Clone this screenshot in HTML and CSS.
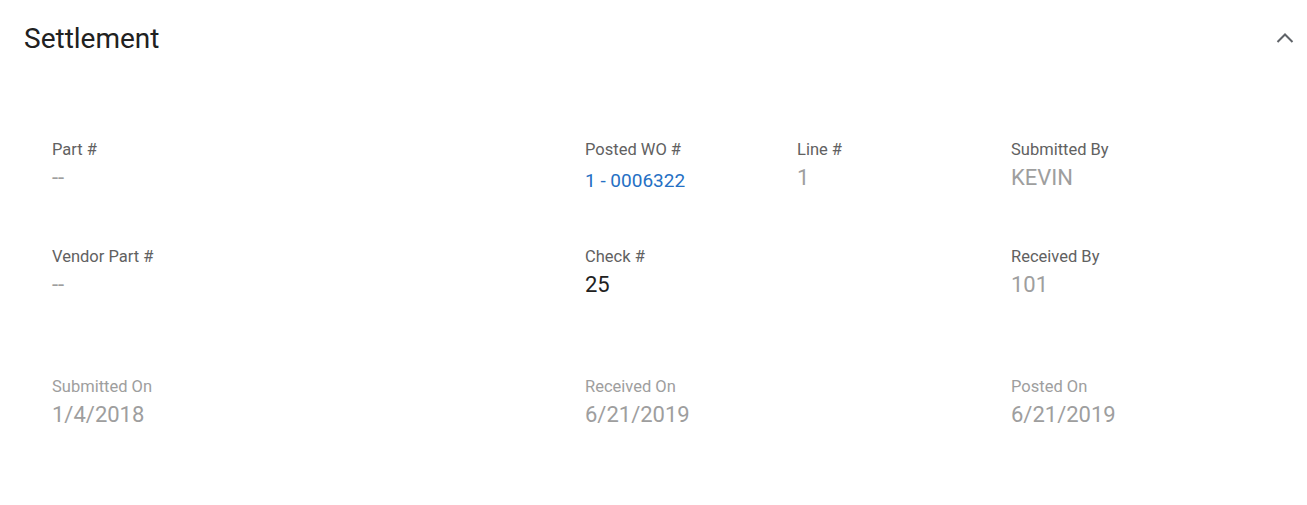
FILE: index.html
```html
<!DOCTYPE html>
<html>
<head>
<meta charset="utf-8">
<link rel="stylesheet" href="styles.css">
</head>
<body>
<section class="panel">
  <header class="panel-header">
    <h2 class="panel-title">Settlement</h2>
    <button class="collapse-btn" aria-label="Collapse">
      <svg width="18" height="12" viewBox="0 0 18 12"><polyline points="1.5,10 9,2.5 16.5,10" fill="none" stroke="#5f6368" stroke-width="2"/></svg>
    </button>
  </header>
  <div class="fields">
    <div class="field f-col1">
      <div class="label">Part #</div>
      <div class="value muted">--</div>
    </div>
    <div class="field f-col2">
      <div class="label">Posted WO #</div>
      <div class="value link">1 - 0006322</div>
    </div>
    <div class="field f-col3">
      <div class="label">Line #</div>
      <div class="value muted">1</div>
    </div>
    <div class="field f-col4">
      <div class="label">Submitted By</div>
      <div class="value muted">KEVIN</div>
    </div>

    <div class="field f-col1">
      <div class="label">Vendor Part #</div>
      <div class="value muted">--</div>
    </div>
    <div class="field f-col2">
      <div class="label">Check #</div>
      <div class="value dark">25</div>
    </div>
    <div class="field f-col4">
      <div class="label">Received By</div>
      <div class="value muted">101</div>
    </div>

    <div class="field f-col1 row3">
      <div class="label light">Submitted On</div>
      <div class="value muted">1/4/2018</div>
    </div>
    <div class="field f-col2 row3">
      <div class="label light">Received On</div>
      <div class="value muted">6/21/2019</div>
    </div>
    <div class="field f-col4 row3">
      <div class="label light">Posted On</div>
      <div class="value muted">6/21/2019</div>
    </div>
  </div>
</section>
</body>
</html>
```

FILE: styles.css
```css
* { box-sizing: border-box; }
html, body {
  margin: 0;
  padding: 0;
  background: #ffffff;
  font-family: Roboto, "Liberation Sans", Arial, sans-serif;
}
.panel {
  width: 1307px;
}
.panel-header {
  display: flex;
  align-items: center;
  justify-content: space-between;
  height: 76px;
  padding: 0 13px 0 24px;
}
.panel-title {
  margin: 2px 0 0 0;
  font-size: 28px;
  line-height: 32px;
  font-weight: 400;
  color: #212121;
  letter-spacing: 0;
}
.collapse-btn {
  border: 0;
  background: transparent;
  padding: 0;
  width: 18px;
  height: 12px;
  margin-top: -1px;
  display: flex;
  align-items: center;
  justify-content: center;
  cursor: pointer;
}
.collapse-btn svg { display: block; }
.fields {
  display: grid;
  grid-template-columns: 533px 212px 214px 1fr;
  padding: 64px 24px 0 52px;
}
.field {
  height: 107px;
}
.field.row3 {
  height: 100px;
  padding-top: 23px;
}
.f-col1 { grid-column: 1; }
.f-col2 { grid-column: 2; }
.f-col3 { grid-column: 3; }
.f-col4 { grid-column: 4; }
.label {
  font-size: 16.5px;
  line-height: 20px;
  color: #616161;
}
.label.light {
  color: #9e9e9e;
}
.value {
  margin-top: 6px;
  font-size: 22px;
  line-height: 24px;
}
.value.muted { color: #9e9e9e; }
.value.dark { color: #212121; }
.value.link {
  color: #2570c4;
  font-size: 19px;
  padding-top: 3px;
}
```
